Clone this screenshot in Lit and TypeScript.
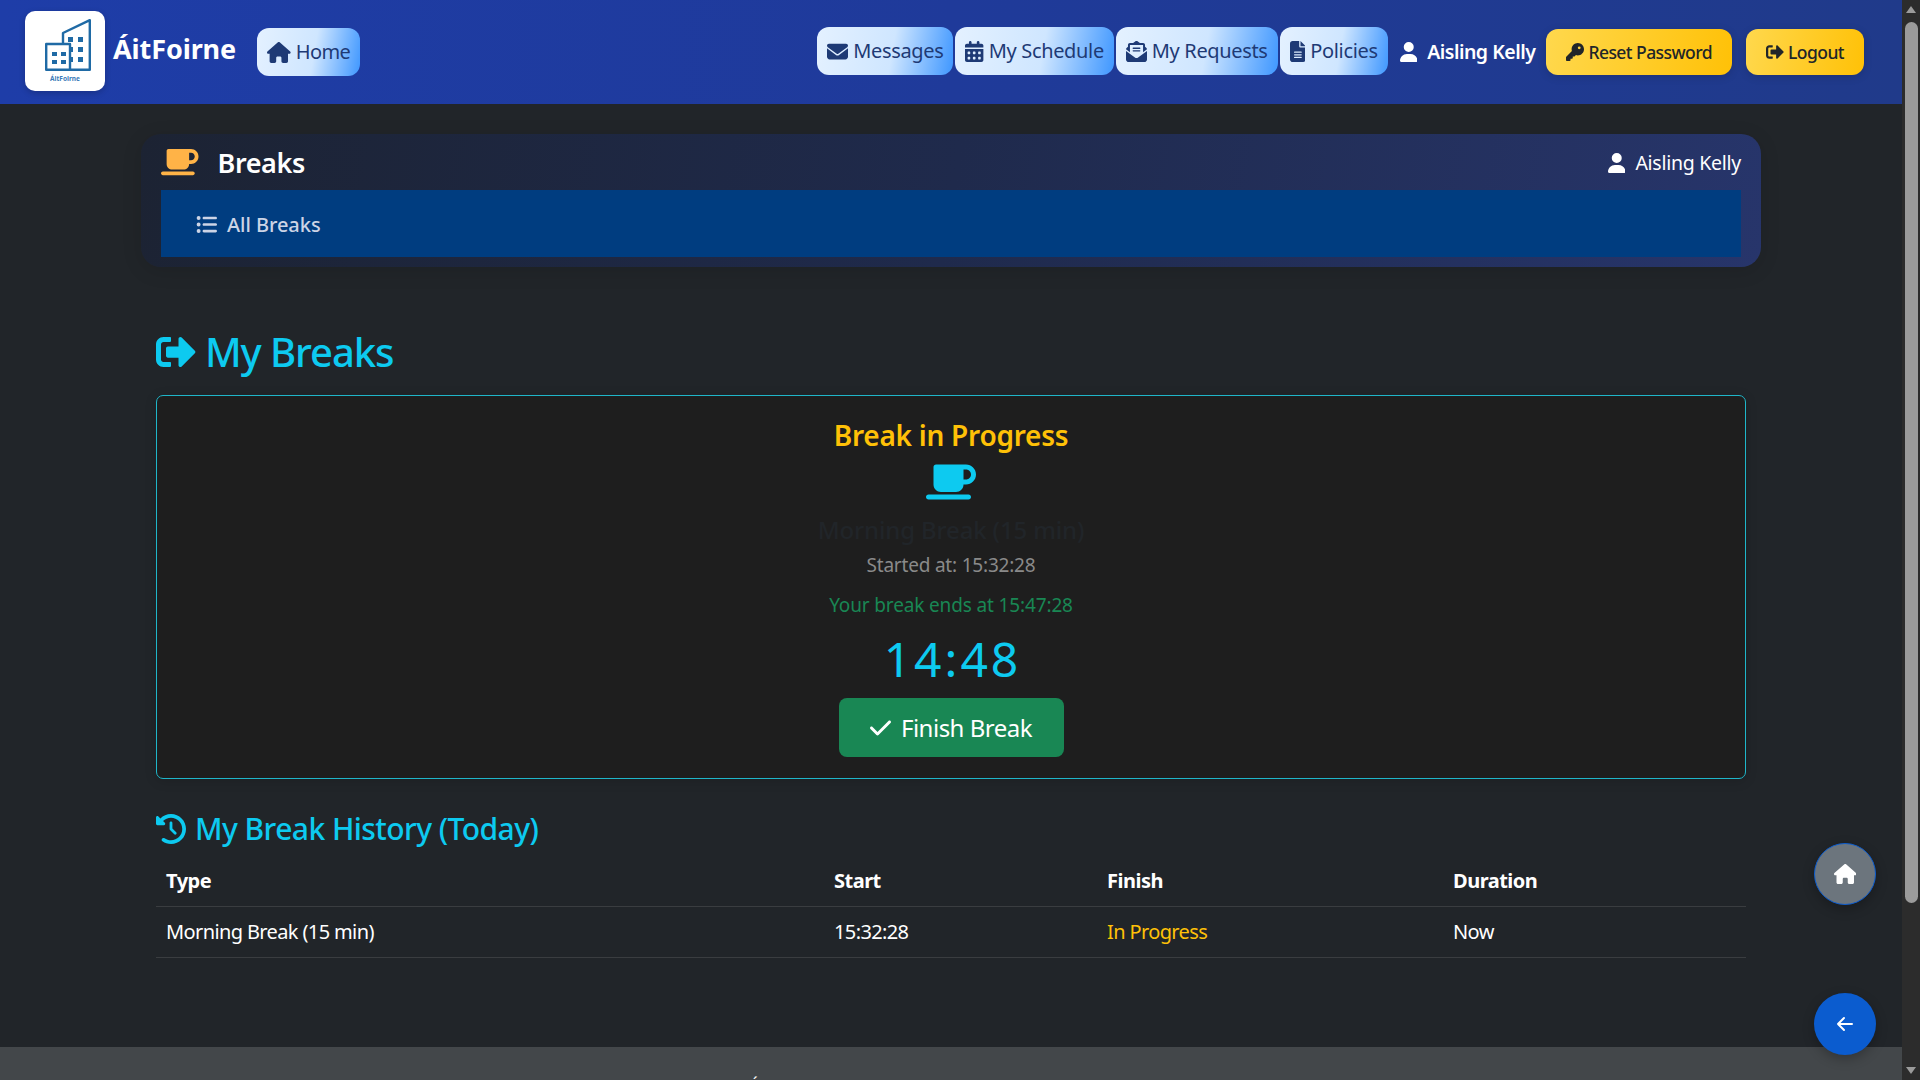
import { LitElement, html, css, svg } from "lit";
import { customElement } from "lit/decorators.js";

const P: Record<string, [string, string]> = {
  house: ["0 0 576 512", "M575.8 255.5c0 18-15 32.1-32 32.1h-32l.7 160.2c0 2.7-.2 5.4-.5 8.1V472c0 22.1-17.9 40-40 40H456c-1.1 0-2.2 0-3.3-.1c-1.4 .1-2.8 .1-4.2 .1H416 392c-22.1 0-40-17.9-40-40V448 384c0-17.7-14.3-32-32-32H256c-17.7 0-32 14.3-32 32v64 24c0 22.1-17.9 40-40 40H160 128.1c-1.5 0-3-.1-4.5-.2c-1.2 .1-2.4 .2-3.6 .2H104c-22.1 0-40-17.9-40-40V360c0-.9 0-1.9 .1-2.8V287.6H32c-18 0-32-14-32-32.1c0-9 3-17 10-24L266.4 8c7-7 15-8 22-8s15 2 21 7L564.8 231.5c8 7 12 15 11 24z"],
  envelope: ["0 0 512 512", "M48 64C21.5 64 0 85.5 0 112c0 15.1 7.1 29.3 19.2 38.4L236.8 313.6c11.4 8.5 27 8.5 38.4 0L492.8 150.4c12.1-9.1 19.2-23.3 19.2-38.4c0-26.5-21.5-48-48-48H48zM0 176V384c0 35.3 28.7 64 64 64H448c35.3 0 64-28.7 64-64V176L294.4 339.2c-22.8 17.1-54 17.1-76.8 0L0 176z"],
  calendar: ["0 0 448 512", "M128 0c17.7 0 32 14.3 32 32V64H288V32c0-17.7 14.3-32 32-32s32 14.3 32 32V64h48c26.5 0 48 21.5 48 48v48H0V112C0 85.5 21.5 64 48 64H96V32c0-17.7 14.3-32 32-32zM0 192H448V464c0 26.5-21.5 48-48 48H48c-26.5 0-48-21.5-48-48V192zm64 80v32c0 8.8 7.2 16 16 16h32c8.8 0 16-7.2 16-16V272c0-8.8-7.2-16-16-16H80c-8.8 0-16 7.2-16 16zm128 0v32c0 8.8 7.2 16 16 16h32c8.8 0 16-7.2 16-16V272c0-8.8-7.2-16-16-16H208c-8.8 0-16 7.2-16 16zm144-16c-8.8 0-16 7.2-16 16v32c0 8.8 7.2 16 16 16h32c8.8 0 16-7.2 16-16V272c0-8.8-7.2-16-16-16H336zM64 400v32c0 8.8 7.2 16 16 16h32c8.8 0 16-7.2 16-16V400c0-8.8-7.2-16-16-16H80c-8.8 0-16 7.2-16 16zm144-16c-8.8 0-16 7.2-16 16v32c0 8.8 7.2 16 16 16h32c8.8 0 16-7.2 16-16V400c0-8.8-7.2-16-16-16H208zm112 16v32c0 8.8 7.2 16 16 16h32c8.8 0 16-7.2 16-16V400c0-8.8-7.2-16-16-16H336c-8.8 0-16 7.2-16 16z"],
  openEnv: ["0 0 512 512", "M215.4 96H144 107.8 96v8.8V144v40.4 89L.2 202.5c1.6-18.1 10.9-34.9 25.7-45.8L48 140.3V96c0-26.5 21.5-48 48-48h76.6l49.9-36.9C232.2 3.9 243.9 0 256 0s23.8 3.9 33.5 11L339.4 48H416c26.5 0 48 21.5 48 48v44.3l22.1 16.4c14.8 10.9 24.1 27.7 25.7 45.8L416 273.4v-89V144 104.8 96H404.2 368 296.6 215.4zM0 448V242.1L217.6 403.3c11.1 8.2 24.6 12.7 38.4 12.7s27.3-4.4 38.4-12.7L512 242.1V448v0c0 35.3-28.7 64-64 64H64c-35.3 0-64-28.7-64-64v0zM176 160H336c8.8 0 16 7.2 16 16s-7.2 16-16 16H176c-8.8 0-16-7.2-16-16s7.2-16 16-16zm0 64H336c8.8 0 16 7.2 16 16s-7.2 16-16 16H176c-8.8 0-16-7.2-16-16s7.2-16 16-16z"],
  file: ["0 0 384 512", "M64 0C28.7 0 0 28.7 0 64V448c0 35.3 28.7 64 64 64H320c35.3 0 64-28.7 64-64V160H256c-17.7 0-32-14.3-32-32V0H64zM256 0V128H384L256 0zM112 256H272c8.8 0 16 7.2 16 16s-7.2 16-16 16H112c-8.8 0-16-7.2-16-16s7.2-16 16-16zm0 64H272c8.8 0 16 7.2 16 16s-7.2 16-16 16H112c-8.8 0-16-7.2-16-16s7.2-16 16-16zm0 64H272c8.8 0 16 7.2 16 16s-7.2 16-16 16H112c-8.8 0-16-7.2-16-16s7.2-16 16-16z"],
  user: ["0 0 448 512", "M224 256A128 128 0 1 0 224 0a128 128 0 1 0 0 256zm-45.7 48C79.8 304 0 383.8 0 482.3C0 498.7 13.3 512 29.7 512H418.3c16.4 0 29.7-13.3 29.7-29.7C448 383.8 368.2 304 269.7 304H178.3z"],
  key: ["0 0 512 512", "M336 352c97.2 0 176-78.8 176-176S433.2 0 336 0S160 78.8 160 176c0 18.7 2.9 36.8 8.3 53.7L7 391c-4.5 4.5-7 10.6-7 17v80c0 13.3 10.7 24 24 24h80c13.3 0 24-10.7 24-24V448h40c13.3 0 24-10.7 24-24V384h40c6.4 0 12.5-2.5 17-7l33.3-33.3c16.9 5.4 35 8.3 53.7 8.3zM376 96a40 40 0 1 1 0 80 40 40 0 1 1 0-80z"],
  signout: ["0 0 512 512", "M497 273L329 441c-15 15-41 4.5-41-17v-96H152c-13.3 0-24-10.7-24-24v-96c0-13.3 10.7-24 24-24h136V88c0-21.4 25.9-32 41-17l168 168c9.3 9.4 9.3 24.6 0 34zM192 436v-40c0-6.6-5.4-12-12-12H96c-17.7 0-32-14.3-32-32V160c0-17.7 14.3-32 32-32h84c6.6 0 12-5.4 12-12V76c0-6.6-5.4-12-12-12H96c-53 0-96 43-96 96v192c0 53 43 96 96 96h84c6.6 0 12-5.4 12-12z"],
  mug: ["0 0 640 512", "M96 64c0-17.7 14.3-32 32-32H448h64c70.7 0 128 57.3 128 128s-57.3 128-128 128H480c0 53-43 96-96 96H192c-53 0-96-43-96-96V64zM480 224h32c35.3 0 64-28.7 64-64s-28.7-64-64-64H480V224zM32 416H544c17.7 0 32 14.3 32 32s-14.3 32-32 32H32c-17.7 0-32-14.3-32-32s14.3-32 32-32z"],
  list: ["0 0 512 512", "M64 144a48 48 0 1 0 0-96 48 48 0 1 0 0 96zM192 64c-17.7 0-32 14.3-32 32s14.3 32 32 32H480c17.7 0 32-14.3 32-32s-14.3-32-32-32H192zm0 160c-17.7 0-32 14.3-32 32s14.3 32 32 32H480c17.7 0 32-14.3 32-32s-14.3-32-32-32H192zm0 160c-17.7 0-32 14.3-32 32s14.3 32 32 32H480c17.7 0 32-14.3 32-32s-14.3-32-32-32H192zM64 464a48 48 0 1 0 0-96 48 48 0 1 0 0 96zm48-208a48 48 0 1 0 -96 0 48 48 0 1 0 96 0z"],
  history: ["0 0 512 512", "M75 75L41 41C25.9 25.9 0 36.6 0 57.9V168c0 13.3 10.7 24 24 24H134.1c21.4 0 32.1-25.9 17-41l-30.8-30.8C155 85.5 203 64 256 64c106 0 192 86 192 192s-86 192-192 192c-40.8 0-78.6-12.7-109.7-34.4c-14.5-10.1-34.4-6.6-44.6 7.9s-6.6 34.4 7.9 44.6C151.2 495 201.7 512 256 512c141.4 0 256-114.6 256-256S397.4 0 256 0C185.3 0 121.3 28.7 75 75zm181 53c-13.3 0-24 10.7-24 24V256c0 6.4 2.5 12.5 7 17l72 72c9.4 9.4 24.6 9.4 33.9 0s9.4-24.6 0-33.9l-65-65V152c0-13.3-10.7-24-24-24z"],
  check: ["0 0 448 512", "M438.6 105.4c12.5 12.5 12.5 32.8 0 45.3l-256 256c-12.5 12.5-32.8 12.5-45.3 0l-128-128c-12.5-12.5-12.5-32.8 0-45.3s32.8-12.5 45.3 0L160 338.7 393.4 105.4c12.5-12.5 32.8-12.5 45.3 0z"],
};

const ico = (n: string, cls = "") => html`<svg class="ico ${cls}" viewBox=${P[n][0]} fill="currentColor" aria-hidden="true">${svg`<path d=${P[n][1]}></path>`}</svg>`;

@customElement("app-root")
export class AppRoot extends LitElement {
  static styles = css`
    :host { display: flex; width: 100%; height: 100vh; overflow: hidden; position: relative;
      font-family: "Noto Sans", "Open Sans", sans-serif; font-size: 20px; line-height: 1.5; color: #fff; background: #212529; }
    * { box-sizing: border-box; }
    .ico { height: 1em; width: auto; display: block; flex: none; }
    .page { flex: 1; min-width: 0; height: 100%; overflow: hidden; display: flex; flex-direction: column; background: #212529; }
    header { height: 104px; flex: none; display: flex; align-items: center; padding: 0 38px 0 25px;
      background: linear-gradient(90deg, #1e3da8 0%, #1f3a9a 50%, #203a8a 100%); }
    .logo { width: 80px; height: 80px; flex: none; margin-top: -2px; background: #fff; border-radius: 10px; display: flex; flex-direction: column; align-items: center; box-shadow: 0 2px 6px rgba(0,0,0,.2); }
    .logo svg { width: 46px; height: 52px; margin-top: 8px; margin-left: 5px; }
    .logo span { font-size: 6.5px; line-height: 8px; font-weight: 700; color: #3a7ab8; margin-top: 4px; letter-spacing: 0; }
    .brand { font-size: 27px; font-weight: 700; line-height: 36px; margin: -6px 0 0 8px; letter-spacing: -.1px; }
    .btn-nav { display: inline-flex; align-items: center; gap: 5px; height: 48px; padding: 0 10px; border-radius: 12px; color: #1e3a75; font-size: 20px; letter-spacing: -.35px; white-space: nowrap;
      background: linear-gradient(100deg, #e4f1ff 0%, #cfe6ff 55%, #3f97ff 100%); }
    .btn-nav .ico { height: 21px; }
    .home { margin-left: 21px; margin-top: 0; letter-spacing: -.6px; }
    .right { margin-left: auto; display: flex; align-items: center; gap: 2px; margin-top: -2px; }
    .who { display: flex; align-items: center; gap: 10px; font-weight: 600; font-size: 19.5px; letter-spacing: -.5px; margin: 2px 9px 0 10px; white-space: nowrap; }
    .who .ico { height: 20px; }
    .btn-y { display: inline-flex; align-items: center; gap: 4px; height: 46px; padding: 0 20px; border-radius: 12px; color: #212529; font-size: 17.5px; font-weight: 500; letter-spacing: -.55px; white-space: nowrap; margin-top: 2px;
      background: linear-gradient(100deg, #ffd84d 0%, #ffc107 100%); box-shadow: 0 2px 8px rgba(0,0,0,.15); }
    .btn-y .ico { height: 18px; }
    .btn-y + .btn-y { margin-left: 12px; }
    .container { width: 1620px; flex: none; margin: 30px auto 0; }
    .panel { height: 133px; padding: 0 20px 10px; border-radius: 20px; background: linear-gradient(100deg, #1c2333 0%, #1f2a4c 50%, #27356b 100%); box-shadow: 0 4px 20px rgba(0,0,0,.12); display: flex; flex-direction: column; }
    .panel-top { height: 56px; display: flex; align-items: center; }
    .panel-top > .ico { height: 30px; color: #ffb347; }
    .panel-top h1 { margin: 2px 0 0 19px; font-size: 27px; font-weight: 600; line-height: 36px; letter-spacing: -.4px; }
    .panel-user { margin: 2px 0 0 auto; display: flex; align-items: center; gap: 10px; font-size: 19.5px; letter-spacing: -.27px; }
    .panel-user .ico { height: 20px; }
    .subnav { flex: 1; background: #003d80; display: flex; align-items: center; gap: 10px; padding: 2px 0 0 35px; color: #ccd4e6; font-weight: 500; font-size: 20px; letter-spacing: -.05px; }
    .subnav .ico { height: 21px; }
    .content { padding: 0 15px; }
    h2 { margin: 60px 0 0; height: 68px; display: flex; align-items: center; gap: 9px; color: #0dcaf0; font-size: 40px; font-weight: 500; line-height: 48px; letter-spacing: -1.1px; padding-bottom: 18px; }
    h2 .ico { height: 40px; }
    .card { height: 384px; border: 1px solid #1fb6c9; border-radius: 7px; background: #1e1e1e; display: flex; flex-direction: column; align-items: center; box-shadow: 0 2px 12px rgba(0,0,0,.15); }
    .card h3 { margin: 19px 0 0; font-size: 28px; line-height: 40px; font-weight: 600; color: #ffc107; letter-spacing: -.25px; }
    .card > .ico { height: 40px; color: #0dcaf0; margin-top: 7px; }
    .muted-title { margin-top: 10px; font-size: 24px; line-height: 36px; font-weight: 500; color: #212529; letter-spacing: -.15px; }
    .started { margin-top: 2px; font-size: 19px; line-height: 30px; color: #8a8a8a; letter-spacing: -.2px; }
    .ends { margin-top: 10px; font-size: 19px; line-height: 30px; color: #198754; letter-spacing: -.14px; }
    .timer { margin-top: 3px; font-size: 48px; line-height: 72px; font-weight: 400; color: #0dcaf0; letter-spacing: 3px; padding-left: 3px; }
    .finish { margin-top: 3px; width: 225px; height: 59px; border-radius: 8px; background: #198754; display: flex; align-items: center; justify-content: center; gap: 10px; font-size: 24px; letter-spacing: -.5px; }
    .finish .ico { height: 24px; }
    h4 { margin: 27px 0 0; display: flex; align-items: center; gap: 9px; color: #0dcaf0; font-size: 30px; line-height: 46px; font-weight: 500; letter-spacing: -.55px; }
    h4 .ico { height: 30px; }
    table { width: 100%; border-collapse: collapse; margin-top: 4px; table-layout: fixed; font-size: 20px; letter-spacing: -.62px; }
    th, td { text-align: left; padding: 10px; line-height: 30px; border-bottom: 1px solid #3a3d40; font-weight: 400; }
    th { font-weight: 700; letter-spacing: -.5px; }
    .c1 { width: 668px; } .c2 { width: 273px; } .c3 { width: 346px; }
    .warn { color: #ffc107; }
    footer { margin-top: auto; height: 33px; flex: none; background: #43474a; overflow: hidden; padding: 27px 0 0 749px; font-size: 17px; line-height: 24px; white-space: nowrap; }
    .bar { width: 18px; flex: none; height: 100%; background: #2c2c2c; position: relative; }
    .bar .up, .bar .down { position: absolute; left: 4px; width: 0; height: 0; border-left: 5px solid transparent; border-right: 5px solid transparent; }
    .bar .up { top: 6px; border-bottom: 7px solid #9b9b9b; }
    .bar .down { bottom: 6px; border-top: 7px solid #9b9b9b; }
    .thumb { position: absolute; left: 3px; right: 2px; top: 22px; height: 881px; border-radius: 7px; background: #9b9b9b; }
    .fab { position: absolute; left: 1814px; width: 62px; height: 62px; border-radius: 50%; display: flex; align-items: center; justify-content: center; box-shadow: 0 4px 12px rgba(0,0,0,.25); }
    .fab-home { top: 843px; background: #6c757d; border: 1px solid #0b5ccf; }
    .fab-home .ico { height: 20px; }
    .fab-back { top: 993px; background: #0b5ccf; }
    .fab-back svg { width: 20px; height: 20px; }
  `;

  render() {
    return html`
      <div class="page">
        <header>
          <div class="logo">
            <svg viewBox="0 0 46 52" fill="none">
              <path d="M1.2 25 H25 V50.8 H1.2 Z M18 25 V14 L44.8 1.2 V50.8 H25" stroke="#1f6aa5" stroke-width="2.4" stroke-linejoin="round"></path>
              <g fill="#1f6aa5">
                <rect x="7" y="33" width="5" height="4"></rect><rect x="16" y="33" width="5" height="4"></rect>
                <rect x="7" y="41" width="5" height="4"></rect><rect x="16" y="41" width="5" height="4"></rect>
                <rect x="23" y="18" width="5" height="5"></rect><rect x="33" y="18" width="5" height="5"></rect>
                <rect x="25" y="28" width="3" height="5"></rect><rect x="33" y="28" width="5" height="5"></rect>
                <rect x="25" y="38" width="3" height="5"></rect><rect x="33" y="38" width="5" height="5"></rect>
              </g>
            </svg>
            <span>ÁitFoirne</span>
          </div>
          <div class="brand">ÁitFoirne</div>
          <a class="btn-nav home">${ico("house")}Home</a>
          <div class="right">
            <a class="btn-nav">${ico("envelope")}Messages</a>
            <a class="btn-nav">${ico("calendar")}My Schedule</a>
            <a class="btn-nav">${ico("openEnv")}My Requests</a>
            <a class="btn-nav">${ico("file")}Policies</a>
            <div class="who">${ico("user")}Aisling Kelly</div>
            <a class="btn-y">${ico("key")}Reset Password</a>
            <a class="btn-y">${ico("signout")}Logout</a>
          </div>
        </header>
        <div class="container">
          <section class="panel">
            <div class="panel-top">
              ${ico("mug")}
              <h1>Breaks</h1>
              <div class="panel-user">${ico("user")}Aisling Kelly</div>
            </div>
            <nav class="subnav">${ico("list")}All Breaks</nav>
          </section>
          <div class="content">
            <h2>${ico("signout")}My Breaks</h2>
            <section class="card">
              <h3>Break in Progress</h3>
              ${ico("mug")}
              <div class="muted-title">Morning Break (15 min)</div>
              <div class="started">Started at: 15:32:28</div>
              <div class="ends">Your break ends at 15:47:28</div>
              <div class="timer">14:48</div>
              <div class="finish">${ico("check")}Finish Break</div>
            </section>
            <h4>${ico("history")}My Break History (Today)</h4>
            <table>
              <thead><tr><th class="c1">Type</th><th class="c2">Start</th><th class="c3">Finish</th><th>Duration</th></tr></thead>
              <tbody><tr><td>Morning Break (15 min)</td><td>15:32:28</td><td class="warn">In Progress</td><td>Now</td></tr></tbody>
            </table>
          </div>
        </div>
        <footer>ÁitFoirne</footer>
      </div>
      <div class="bar"><i class="up"></i><i class="thumb"></i><i class="down"></i></div>
      <a class="fab fab-home">${ico("house")}</a>
      <a class="fab fab-back">
        <svg viewBox="0 0 20 20" fill="none" stroke="#fff" stroke-width="2" stroke-linecap="round" stroke-linejoin="round"><path d="M17 10 H3 M9 4 L3 10 L9 16"></path></svg>
      </a>
    `;
  }
}
